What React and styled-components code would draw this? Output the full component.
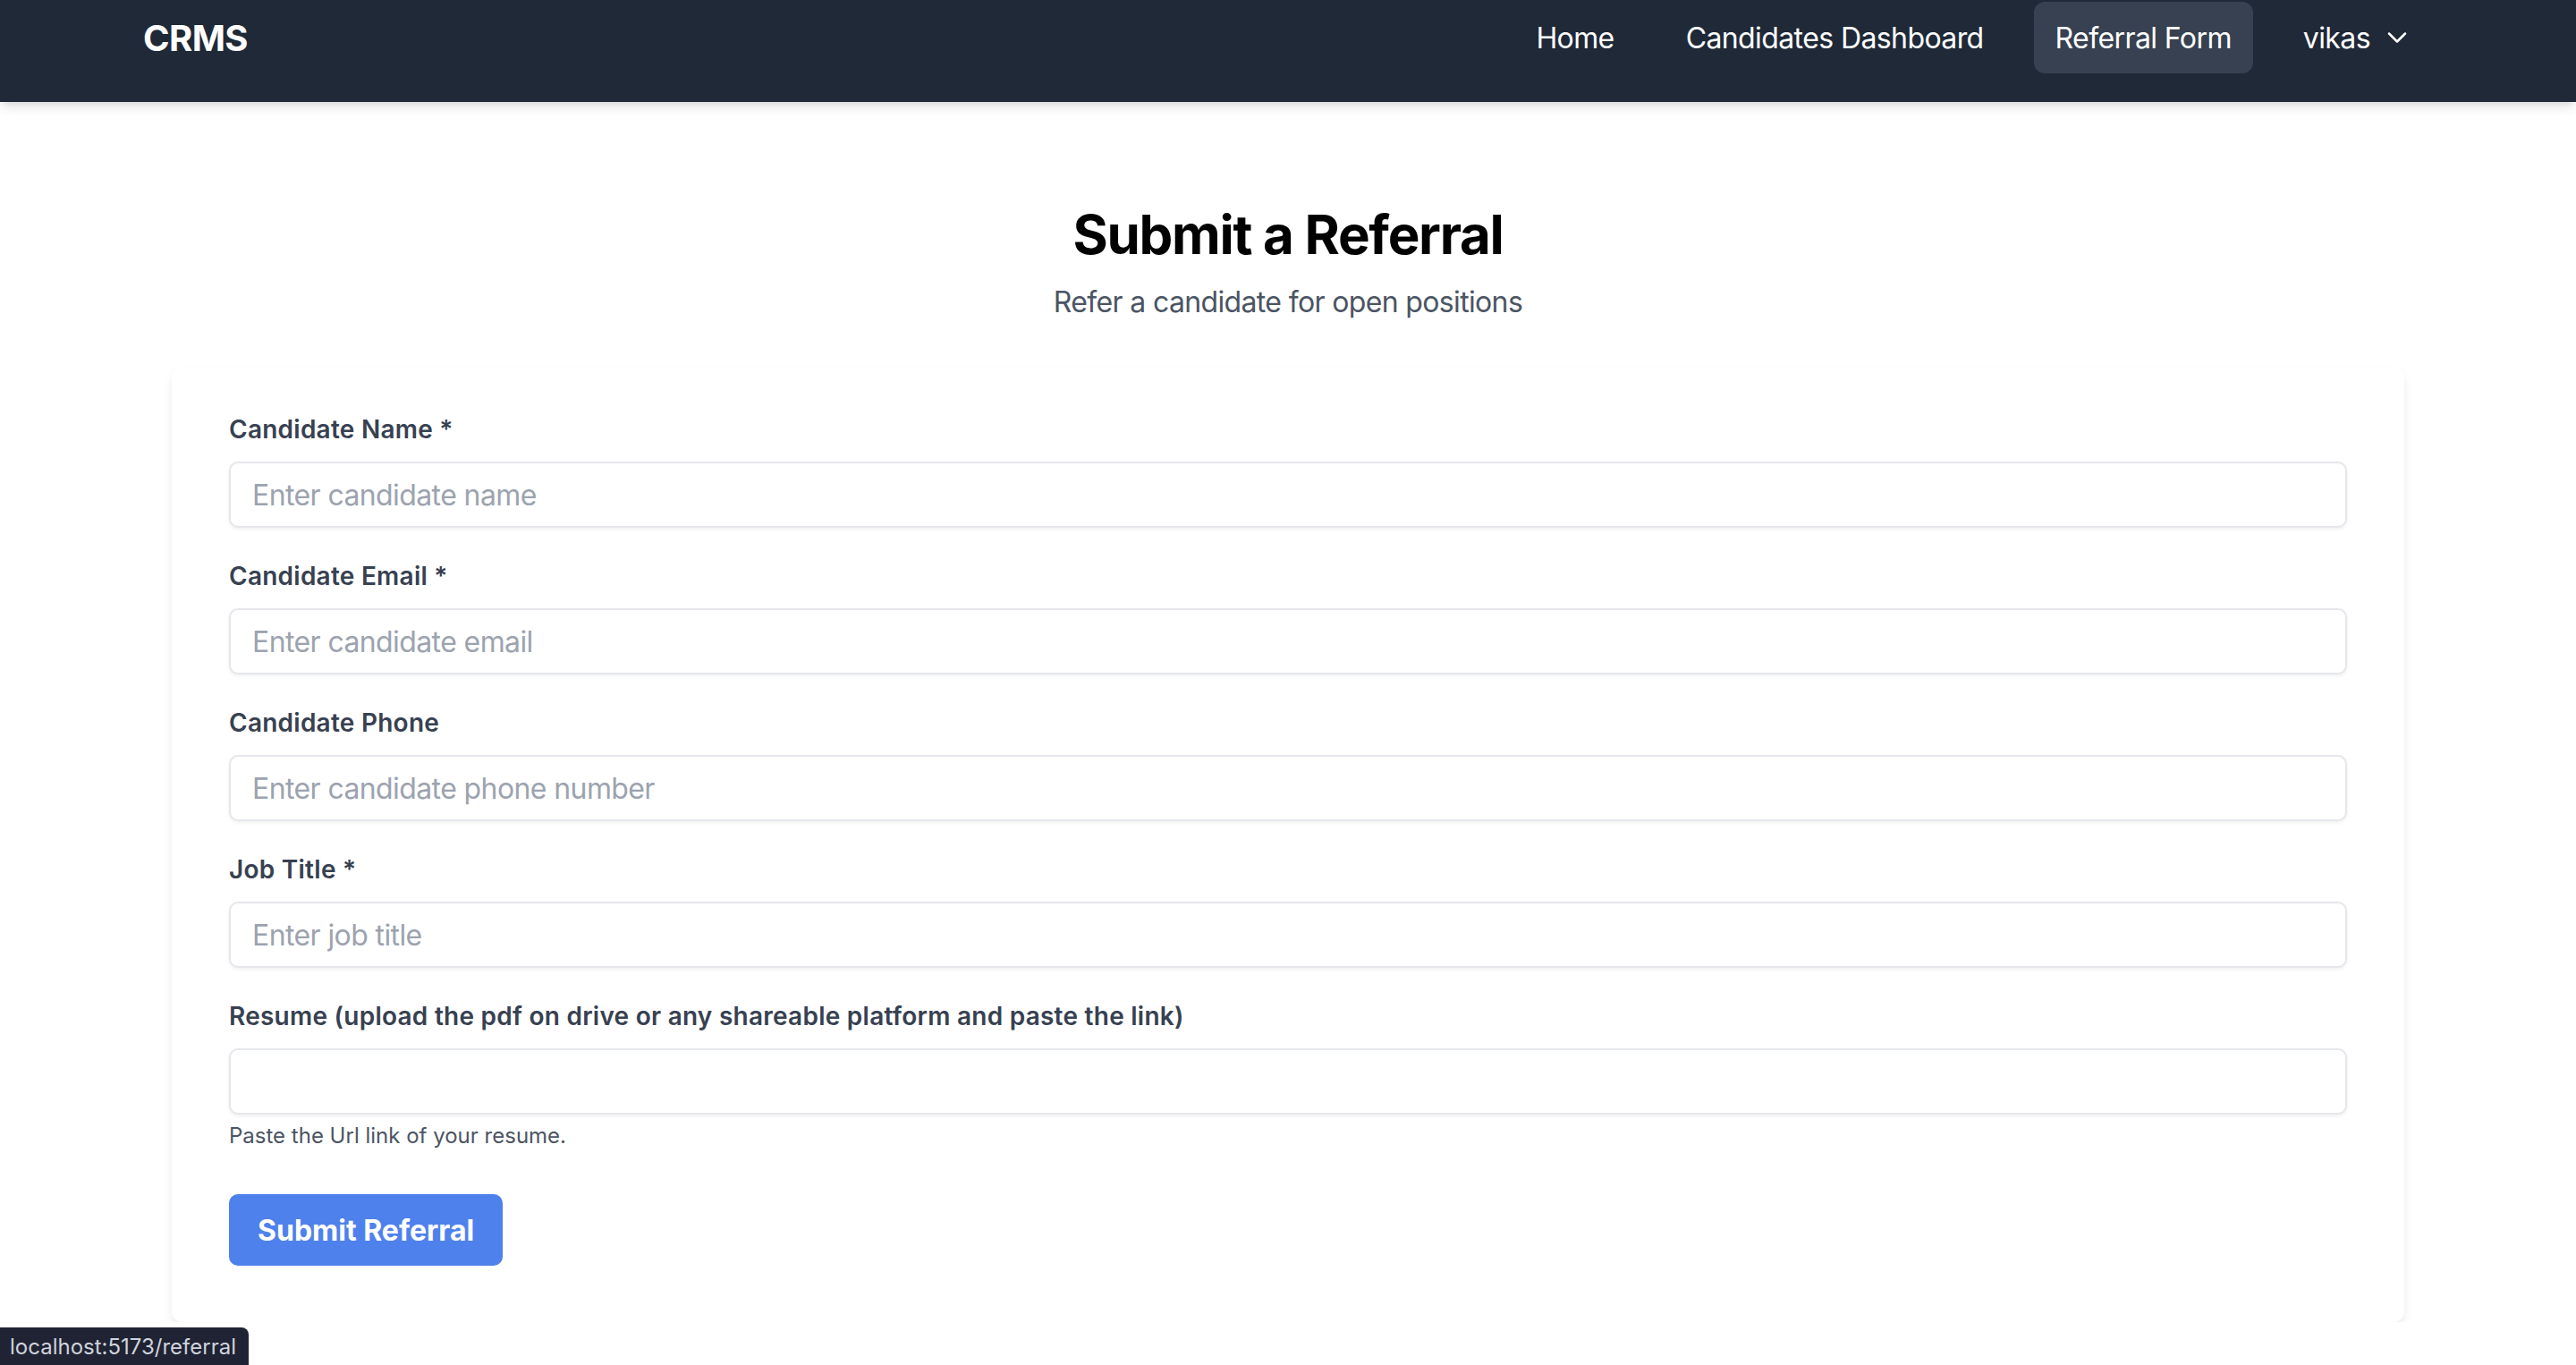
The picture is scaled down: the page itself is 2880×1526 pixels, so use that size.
import React from "react";
import styled, { createGlobalStyle } from "styled-components";

const GlobalStyle = createGlobalStyle`
	* {
		box-sizing: border-box;
	}
	body {
		margin: 0;
		background: #ffffff;
		font-family: Inter, "Noto Sans", "Liberation Sans", sans-serif;
		color: #111827;
	}
`;

const NavBar = styled.header`
	height: 114px;
	background: #1f2937;
	box-shadow: 0 8px 12px -2px rgba(0, 0, 0, 0.1), 0 4px 8px -4px rgba(0, 0, 0, 0.1);
	position: relative;
	z-index: 1;
`;

const NavInner = styled.div`
	max-width: 2560px;
	margin: 0 auto;
	padding-top: 2px;
	display: flex;
	align-items: flex-start;
	justify-content: space-between;
`;

const Brand = styled.div`
	height: 80px;
	display: flex;
	align-items: center;
	color: #ffffff;
	font-size: 40px;
	font-weight: 700;
	letter-spacing: -0.6px;
`;

const NavLinks = styled.nav`
	display: flex;
	gap: 32px;
`;

const NavLink = styled.a`
	height: 80px;
	padding: ${p => (p.$menu ? "0 22px 0 24px" : "0 24px")};
	display: flex;
	align-items: center;
	border-radius: 12px;
	color: #ffffff;
	font-size: 32px;
	font-weight: 400;
	letter-spacing: -0.6px;
	text-decoration: none;
	background: ${p => (p.$active ? "#374151" : "transparent")};
	cursor: pointer;
`;

const Chevron = styled.svg`
	width: 36px;
	height: 36px;
	margin-left: 12px;
`;

const Main = styled.main`
	max-width: 2560px;
	margin: 0 auto;
	padding: 112px 32px 0;
`;

const Title = styled.h1`
	margin: 0 0 16px;
	text-align: center;
	font-size: 60px;
	line-height: 72px;
	font-weight: 700;
	color: #000000;
	letter-spacing: -1.3px;
`;

const Subtitle = styled.p`
	margin: 0 0 48px;
	text-align: center;
	font-size: 32px;
	line-height: 48px;
	color: #4b5563;
	letter-spacing: -0.65px;
`;

const Card = styled.form`
	background: #ffffff;
	border-radius: 12px;
	padding: 50px 64px 63px;
	box-shadow: 0 8px 14px -2px rgba(0, 0, 0, 0.08), 0 2px 8px -2px rgba(0, 0, 0, 0.05);
`;

const Field = styled.div`
	display: flex;
	flex-direction: column;
	margin-bottom: 34px;
`;

const Label = styled.label`
	font-size: 28px;
	line-height: 40px;
	font-weight: 600;
	letter-spacing: 0.25px;
	color: #374151;
	margin-bottom: 16px;
`;

const Input = styled.input`
	height: 74px;
	width: 100%;
	padding: 0 24px;
	border: 2px solid #e5e7eb;
	border-radius: 10px;
	box-shadow: 0 2px 4px rgba(0, 0, 0, 0.06);
	font-family: inherit;
	font-size: 32px;
	letter-spacing: -0.6px;
	color: #111827;
	outline: none;
	&::placeholder {
		color: #9ca3af;
	}
`;

const Hint = styled.p`
	margin: 8px 0 0;
	font-size: 24px;
	line-height: 32px;
	color: #4b5563;
`;

const SubmitButton = styled.button`
	margin-top: 15px;
	height: 80px;
	padding: 0 32px;
	border: none;
	border-radius: 10px;
	background: #4f81ec;
	color: #ffffff;
	font-family: inherit;
	font-size: 32px;
	font-weight: 700;
	cursor: pointer;
`;

const StatusBubble = styled.div`
	position: fixed;
	left: 0;
	bottom: 0;
	height: 42px;
	padding: 0 14px 0 11px;
	display: flex;
	align-items: center;
	background: #1f2333;
	border-top-right-radius: 8px;
	color: #cfd3dc;
	font-size: 24px;
`;

const fields = [
	{ label: "Candidate Name *", placeholder: "Enter candidate name", type: "text" },
	{ label: "Candidate Email *", placeholder: "Enter candidate email", type: "email" },
	{ label: "Candidate Phone", placeholder: "Enter candidate phone number", type: "tel" },
	{ label: "Job Title *", placeholder: "Enter job title", type: "text" }
];

const App = () => {
	return (
		<>
			<GlobalStyle />
			<NavBar>
				<NavInner>
					<Brand>CRMS</Brand>
					<NavLinks>
						<NavLink>Home</NavLink>
						<NavLink>Candidates Dashboard</NavLink>
						<NavLink $active>Referral Form</NavLink>
						<NavLink $menu>
							vikas
							<Chevron
								viewBox="0 0 24 24"
								fill="none"
								stroke="currentColor"
								strokeWidth="1.7"
								strokeLinecap="round"
								strokeLinejoin="round"
							>
								<path d="m6 9 6 6 6-6" />
							</Chevron>
						</NavLink>
					</NavLinks>
				</NavInner>
			</NavBar>
			<Main>
				<Title>Submit a Referral</Title>
				<Subtitle>Refer a candidate for open positions</Subtitle>
				<Card onSubmit={e => e.preventDefault()}>
					{fields.map(f => (
						<Field key={f.label}>
							<Label>{f.label}</Label>
							<Input type={f.type} placeholder={f.placeholder} />
						</Field>
					))}
					<Field>
						<Label>
							Resume (upload the pdf on drive or any shareable platform and paste the link)
						</Label>
						<Input type="url" />
						<Hint>Paste the Url link of your resume.</Hint>
					</Field>
					<SubmitButton type="submit">Submit Referral</SubmitButton>
				</Card>
			</Main>
			<StatusBubble>localhost:5173/referral</StatusBubble>
		</>
	);
};

export default App;
